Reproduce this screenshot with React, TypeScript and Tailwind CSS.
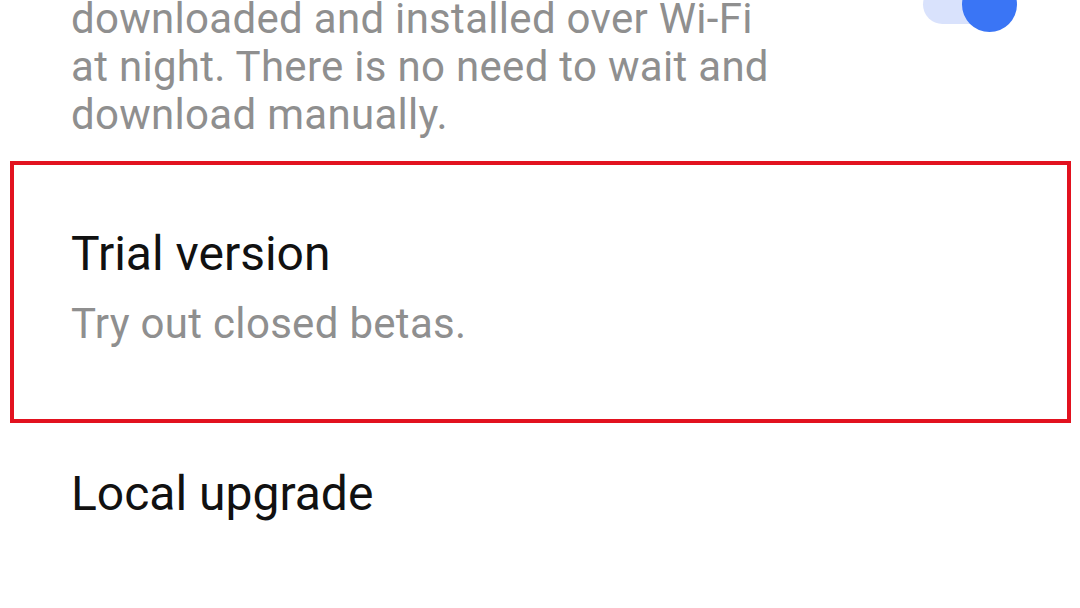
const Toggle: React.FC = () => {
  return (
    <div className="relative w-[94px] h-[55px] shrink-0">
      <div className="absolute left-0 top-[8px] h-[39px] w-[80px] rounded-full bg-[#d9e2fc]" />
      <div className="absolute right-0 top-0 h-[55px] w-[55px] rounded-full bg-[#3a75f5]" />
    </div>
  );
};

const App: React.FC = () => {
  return (
    <div className="w-[1080px] h-[608px] overflow-hidden bg-white font-['Roboto',sans-serif]">
      {/* Auto update row (scrolled, partially visible) */}
      <div className="flex items-start justify-between pl-[71px] pr-[63px] mt-[-5px]">
        <p className="text-[42px] leading-[48px] tracking-[0.3px] text-[#8f8f8f]">
          downloaded and installed over Wi-Fi
          <br />
          at night. There is no need to wait and
          <br />
          download manually.
        </p>
        <div className="mt-[-18px]">
          <Toggle />
        </div>
      </div>

      {/* Highlighted item */}
      <div className="mt-[22px] ml-[10px] w-[1061px] border-[4px] border-[#e2121f] pt-[61px] pl-[57px] pb-[71px]">
        <h3 className="text-[48px] leading-[56px] text-[#111111]">Trial version</h3>
        <p className="mt-[18px] text-[42px] leading-[48px] tracking-[0.3px] text-[#8f8f8f]">
          Try out closed betas.
        </p>
      </div>

      <div className="mt-[43px] pl-[71px]">
        <h3 className="text-[48px] leading-[56px] text-[#111111]">Local upgrade</h3>
      </div>
    </div>
  );
};

export default App;
